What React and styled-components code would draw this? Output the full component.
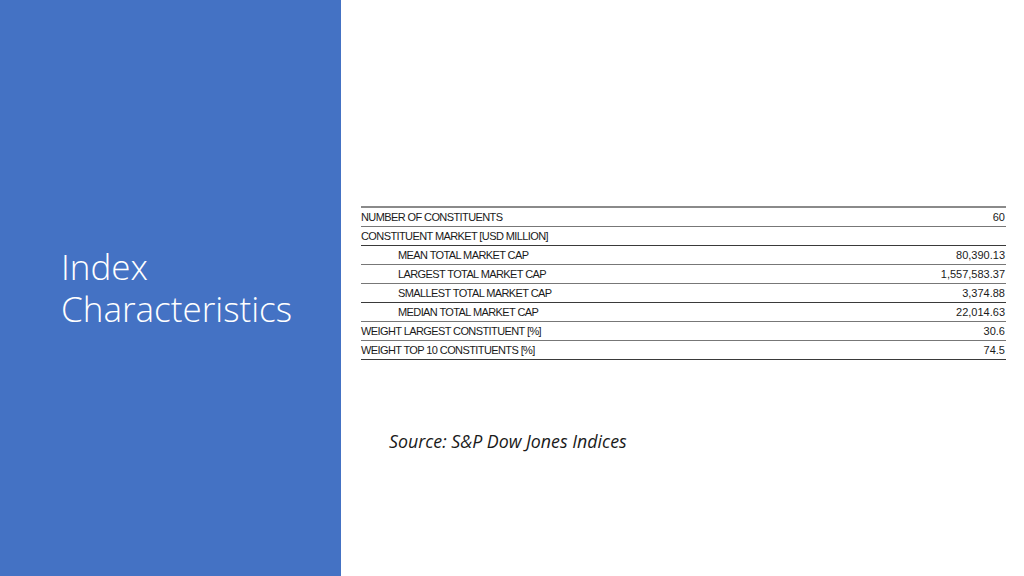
import styled, { createGlobalStyle } from "styled-components"

const GlobalStyle = createGlobalStyle`
    html, body {
        margin: 0;
        padding: 0;
        background: #ffffff;
    }
`

const rows = [
    { label: "NUMBER OF CONSTITUENTS", value: "60" },
    { label: "CONSTITUENT MARKET [USD MILLION]", value: "" },
    { label: "MEAN TOTAL MARKET CAP", value: "80,390.13", indent: true },
    { label: "LARGEST TOTAL MARKET CAP", value: "1,557,583.37", indent: true },
    { label: "SMALLEST TOTAL MARKET CAP", value: "3,374.88", indent: true },
    { label: "MEDIAN TOTAL MARKET CAP", value: "22,014.63", indent: true },
    { label: "WEIGHT LARGEST CONSTITUENT [%]", value: "30.6" },
    { label: "WEIGHT TOP 10 CONSTITUENTS [%]", value: "74.5" },
]

const Slide = styled.div`
    width: 1024px;
    height: 576px;
    display: flex;
    overflow: hidden;
`

const Side = styled.div`
    width: 341px;
    flex-shrink: 0;
    background-color: #4472c4;
    display: flex;
    align-items: center;
    padding-left: 61px;
    box-sizing: border-box;
`

const Title = styled.h1`
    margin: 0;
    color: #ffffff;
    font-family: "Open Sans", "Liberation Sans", sans-serif;
    font-weight: 300;
    font-size: 35px;
`

const TitleLine = styled.span`
    display: block;
    line-height: 42px;
`

const Main = styled.div`
    flex: 1;
    padding: 206px 18px 0 20px;
`

const Table = styled.div`
    border-top: 2px solid #8a8a8a;
    width: 645px;
`

const Row = styled.div`
    display: flex;
    justify-content: space-between;
    align-items: center;
    height: 18px;
    border-bottom: 1px solid ${p => (p.dark ? "#3a3a3a" : "#777777")};
    padding: 0 1px 0 ${p => (p.indent ? "37px" : "0")};
    font-family: "Liberation Sans", Arial, sans-serif;
    font-size: 11px;
    color: #1a1a1a;
`

const Label = styled.span`
    letter-spacing: -0.6px;
`

const Source = styled.p`
    margin: 69px 0 0 28px;
    font-family: "Open Sans", "Liberation Sans", sans-serif;
    font-style: italic;
    font-size: 17.8px;
    color: #1a1a1a;
`

export default function App() {
    return (
        <Slide>
            <GlobalStyle />
            <Side>
                <Title>
                    <TitleLine>Index</TitleLine>
                    <TitleLine>Characteristics</TitleLine>
                </Title>
            </Side>
            <Main>
                <Table>
                    {rows.map((r, i) => (
                        <Row key={i} indent={r.indent} dark={i === 1 || i === 4 || i === 7}>
                            <Label>{r.label}</Label>
                            <span>{r.value}</span>
                        </Row>
                    ))}
                </Table>
                <Source>Source: S&amp;P Dow Jones Indices</Source>
            </Main>
        </Slide>
    )
}
